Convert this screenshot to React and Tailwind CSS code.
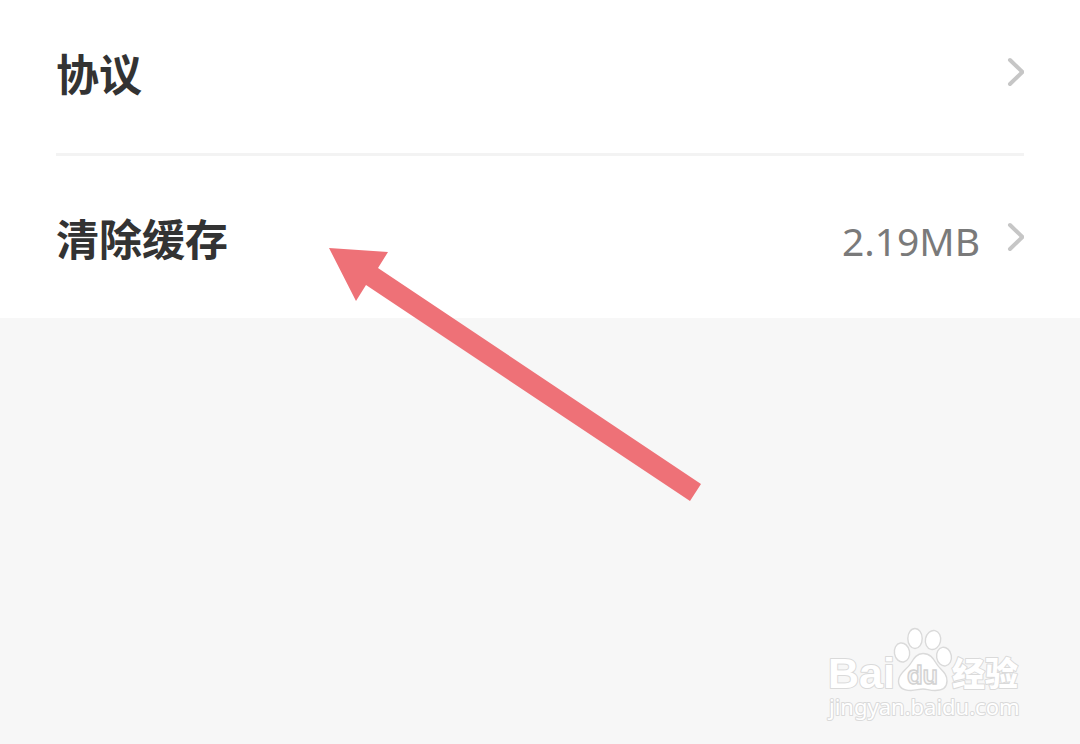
import React from 'react';

const items = [
  { id: 'agreement', label: '协议' },
  { id: 'cache', label: '清除缓存', value: '2.19MB' },
];

function Chevron() {
  return (
    <svg className="w-5 h-8 ml-6 self-center" viewBox="0 0 20 32" fill="none" stroke="#c6c6c6" strokeWidth="4" strokeLinecap="round" aria-hidden="true">
      <path d="M6 4 L18.5 16 L6 28" />
    </svg>
  );
}

function SettingRow({ label, value, first }) {
  return (
    <button
      type="button"
      className={`w-full flex items-baseline pb-[49px] text-left ${first ? 'pt-10' : 'pt-[49px]'}`}
    >
      <span className="flex-1 text-[43px] leading-[64px] font-bold text-[#333333]">{label}</span>
      {value && (
        <span className="font-['Noto_Sans',sans-serif] text-[39px] leading-[48px] text-[#7a7a7a]">{value}</span>
      )}
      <Chevron />
    </button>
  );
}

function Arrow() {
  return (
    <svg className="absolute left-[329px] top-[247px] w-[374px] h-[256px] pointer-events-none" viewBox="0 0 374 256" aria-hidden="true">
      <path d="M0 1 L59 5 L49 21 L372 237 L361 254 L37 38 L27 54 Z" fill="#ee7177" />
    </svg>
  );
}

function Watermark() {
  return (
    <div className="absolute right-[58px] bottom-5 w-[194px] pointer-events-none">
      <svg className="w-full h-[96px] overflow-visible" viewBox="0 0 194 96" fill="#ffffff" stroke="#dadada" strokeWidth="2">
        <g paintOrder="stroke" strokeLinejoin="round">
          <text x="0" y="60" fontFamily="Liberation Sans, sans-serif" fontWeight="700" fontSize="43">Bai</text>
          <text x="124" y="58" fontFamily="Noto Sans CJK SC, sans-serif" fontWeight="900" fontSize="33">经验</text>
          <text x="1" y="87" fontFamily="Noto Sans, sans-serif" fontSize="22">jingyan.baidu.com</text>
        </g>
        <g strokeWidth="1.4">
          <ellipse cx="74" cy="24.5" rx="7.6" ry="9.6" transform="rotate(-10 74 24.5)" />
          <ellipse cx="87" cy="10.5" rx="7.2" ry="10" />
          <ellipse cx="105" cy="12" rx="7.6" ry="9.6" transform="rotate(12 105 12)" />
          <ellipse cx="116" cy="28.6" rx="7.4" ry="9.4" transform="rotate(-10 116 28.6)" />
          <path d="M95 25.5 C102 25.5 105 30 108 35 C112 42 119 44 119 53 C119 60 114 62.5 107 62.5 C101 62.5 99 61 95 61 C91 61 88 62.5 83 62.5 C75 62.5 70.5 59 70.5 53 C70.5 45 79 42 83 35 C86 30 89 25.5 95 25.5 Z" />
          <text x="79" y="56" fontFamily="Inter, sans-serif" fontWeight="600" fontSize="25" fill="#f7f7f7" stroke="#d2d2d2">du</text>
        </g>
      </svg>
    </div>
  );
}

export default function App() {
  return (
    <div className="relative min-h-screen bg-[#f7f7f7] font-['Noto_Sans_CJK_SC',sans-serif]">
      <ul className="bg-white px-14 divide-y-3 divide-[#f3f3f3]">
        {items.map((item, i) => (
          <li key={item.id}>
            <SettingRow label={item.label} value={item.value} first={i === 0} />
          </li>
        ))}
      </ul>
      <Arrow />
      <Watermark />
    </div>
  );
}
